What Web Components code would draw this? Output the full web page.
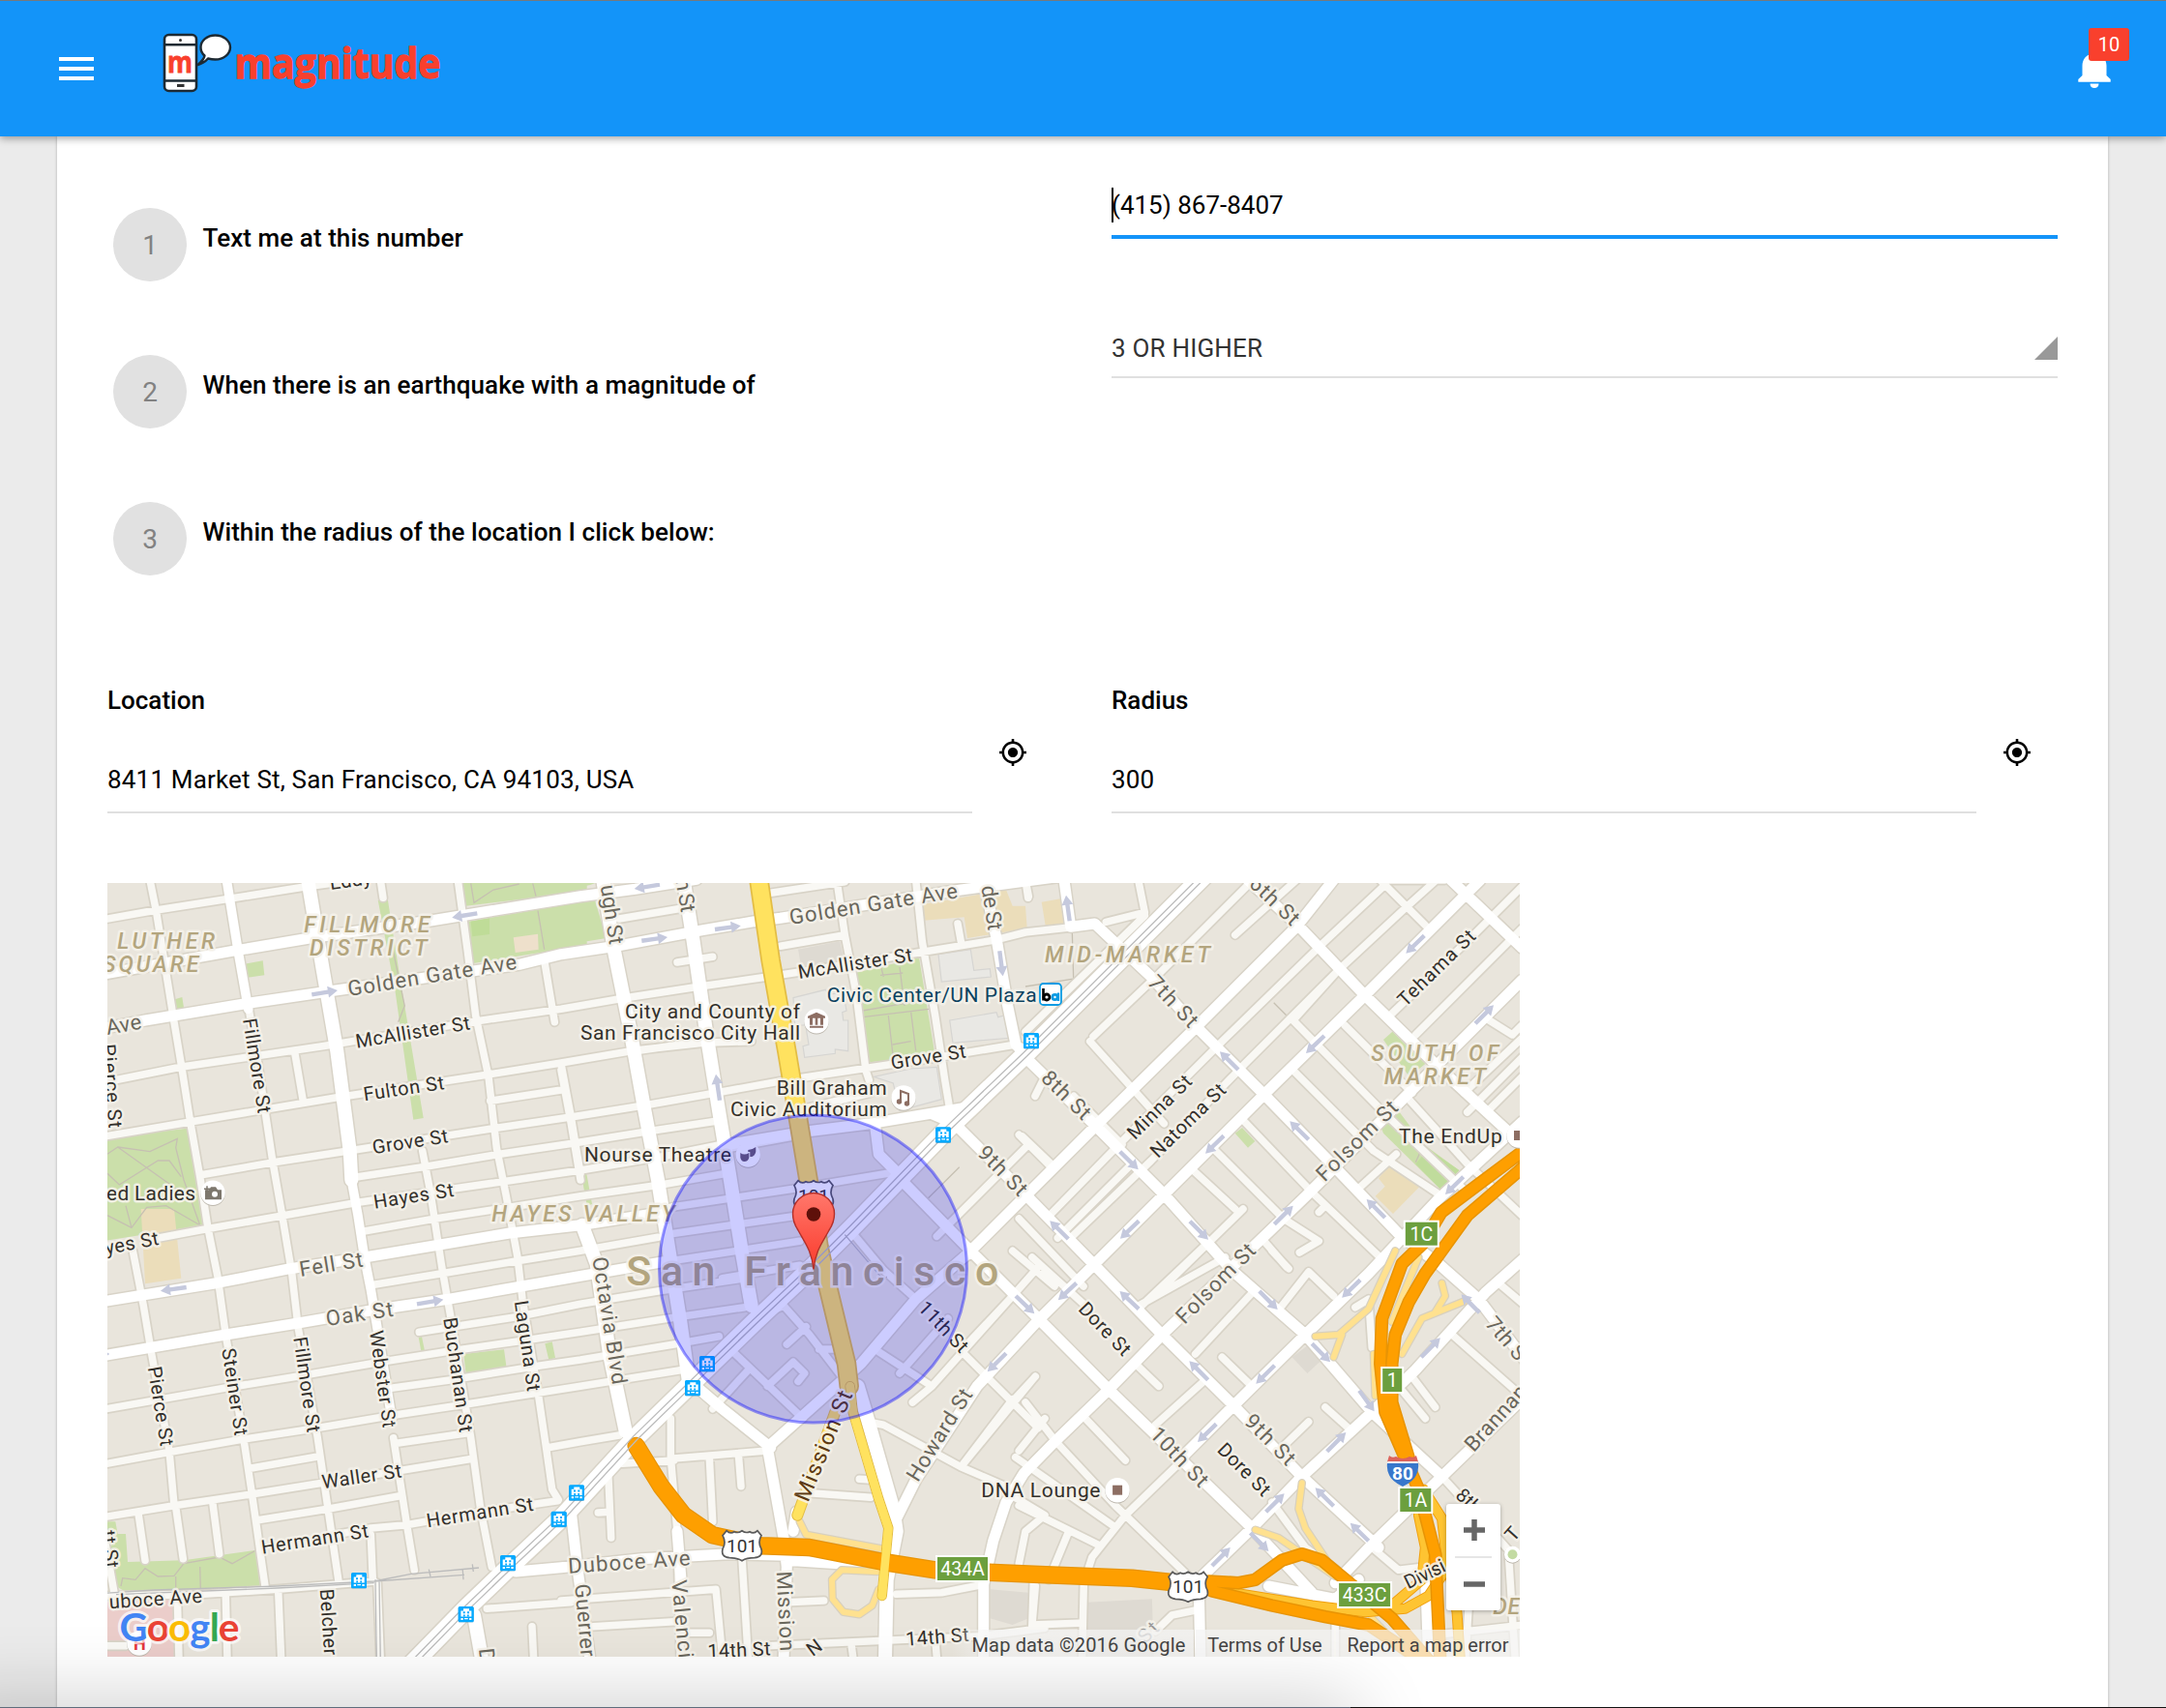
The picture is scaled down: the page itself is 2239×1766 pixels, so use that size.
<!DOCTYPE html>
<html lang="en">
<head>
<meta charset="utf-8">
<title>Magnitude</title>
<style>
html,body{margin:0;height:100%;background:#ebebeb;font-family:Roboto,"Liberation Sans",sans-serif;overflow:hidden}
</style>
</head>
<body>
<mg-app></mg-app>
<script>
const define = (name, html, setup) => customElements.define(name, class extends HTMLElement {
  constructor(){
    super();
    this.attachShadow({mode:'open'}).innerHTML = html;
  }
  connectedCallback(){ if (setup) setup(this, this.shadowRoot); }
});

define('mg-logo', `
<style>:host{display:block;width:300px;height:70px}svg{display:block;overflow:visible}</style>
<svg width="300" height="70" viewBox="165 30 300 70">
  <rect x="170" y="36" width="33" height="58" rx="4.5" fill="#fff" stroke="#1d2a33" stroke-width="2.6"/>
  <path d="M170 46.3H203M170 83.5H203" stroke="#1d2a33" stroke-width="2.6"/>
  <rect x="183" y="87" width="7.5" height="3" fill="#333"/><circle cx="186.5" cy="41.5" r="1.5" fill="#333"/>
  <path d="M222.500 36.500C231 36.500 238 42 238 49S231 61.500 222.500 61.500C219.500 61.500 217 61 215 60.500C212 64 208.500 66 204.500 67C208 64 211 61 211.500 57.500C209 55.500 207.500 52.500 207.500 49C207.500 42 214 36.500 222.500 36.500Z" fill="#fff" stroke="#1d2a33" stroke-width="2.4" stroke-linejoin="round"/>
  <text x="173" y="74.500" font-family="Open Sans" font-weight="700" font-size="31" fill="#f9402d" stroke="#f9402d" stroke-width=".8" textLength="26" lengthAdjust="spacingAndGlyphs">m</text>
  <text x="242.500" y="80.500" font-family="Open Sans" font-weight="700" font-size="43" fill="#f9402d" stroke="#f9402d" stroke-width="1.300" textLength="213" lengthAdjust="spacingAndGlyphs">magnitude</text>
</svg>`);

define('mg-bell', `
<style>
:host{display:block;position:relative;width:34px;height:41px}
svg{display:block}
.badge{position:absolute;left:11px;top:-22px;width:42px;height:34px;border-radius:3px;background:#f9402d;color:#fff;font-size:20px;line-height:34px;text-align:center}
</style>
<svg width="34" height="41" viewBox="0 0 34 41"><path fill="#fff" d="M14.200 4.500C14.200 2 15.200 .8 17 .8S19.800 2 19.800 4.500C26 6 29.500 11 29.500 17V27L33.700 31V33.700H.3V31L4.500 27V17C4.500 11 8 6 14.200 4.500ZM12.500 35.500H21.500C21.500 38.500 19.500 40 17 40S12.500 38.500 12.500 35.500Z"/></svg>
<span class="badge"><slot></slot></span>`);

define('mg-header', `
<style>
:host{display:flex;box-sizing:border-box;height:141px;padding:0 57px 0 61px;background:#1394f9;border-top:1px solid #75797d;position:relative;z-index:3;box-shadow:0 2px 8px rgba(0,0,0,.38)}
.burger{display:flex;flex-direction:column;gap:6px;margin-top:58px;width:36px}
.burger i{height:4px;background:#fff}
mg-logo{margin:29px auto 0 68px}
mg-bell{margin-top:50px}
</style>
<div class="burger"><i></i><i></i><i></i></div>
<mg-logo></mg-logo>
<mg-bell>10</mg-bell>`);

define('mg-step', `
<style>
:host{display:flex;gap:16.5px;height:152px;padding-left:6px;font-size:26px;font-weight:500;color:#000;box-sizing:border-box}
b{width:76px;height:76px;border-radius:50%;background:#e1e1e1;color:#828282;font-size:28px;font-weight:400;line-height:77px;text-align:center}
span{line-height:30px;margin-top:16px;white-space:nowrap;letter-spacing:.065px}
</style>
<b></b><span><slot></slot></span>`, (el, r) => r.querySelector('b').textContent = el.getAttribute('n'));

define('mg-field', `
<style>
:host{display:flex;align-items:center;box-sizing:border-box;height:60px;border-bottom:2px solid #e0e0e0;font-size:26px;line-height:36px;color:#000;white-space:nowrap}
:host([focused]){border-bottom:4px solid #1394f9;height:62px;padding-bottom:4px}
i{display:none;width:2px;height:36px;background:#000;margin-right:-2px}
:host([focused]) i{display:block}
:host([select]){color:#333;letter-spacing:.2px}
svg{display:none;margin-left:auto}
:host([select]) svg{display:block}
</style>
<i></i><slot></slot><svg width="24" height="24"><path d="M24 0V24H0Z" fill="#999"/></svg>`);

define('mg-locator', `
<style>
:host{display:grid;grid-template-columns:894px 28px;column-gap:28px;align-items:start}
label{grid-column:1/3;font-size:26px;font-weight:500;line-height:30px;height:73px}
mg-field{height:60px;margin-top:-1px;grid-column:1;padding-bottom:8px;letter-spacing:.18px}
svg{display:block;margin-top:-18px}
</style>
<label></label>
<mg-field><slot></slot></mg-field>
<svg width="28" height="28" viewBox="1 1 22 22"><path d="M12 8c-2.210 0-4 1.790-4 4s1.790 4 4 4 4-1.790 4-4-1.790-4-4-4zm8.940 3c-.46-4.170-3.770-7.480-7.940-7.940V1h-2v2.060C6.830 3.520 3.520 6.830 3.060 11H1v2h2.060c.46 4.170 3.770 7.480 7.940 7.940V23h2v-2.060c4.170-.46 7.480-3.770 7.940-7.940H23v-2h-2.060zM12 19c-3.870 0-7-3.130-7-7s3.130-7 7-7 7 3.130 7 7-3.130 7-7 7z"/></svg>`,
(el, r) => r.querySelector('label').textContent = el.getAttribute('label'));

/* Map survey sheets: origin and units per pixel. Points in the data below are
   written as "sheet x,y x,y ..." and converted to page units. */
const sheets = {A:[100,900,3],B:[580,900,3],C:[1060,900,3],D:[100,1300,3],E:[580,1300,3],F:[1060,1300,2.9037]};
const pts = s => {
  let t = sheets.A; const out = [];
  for (const k of s.trim().split(/\s+/)) {
    if (sheets[k]) { t = sheets[k]; continue; }
    const [x,y] = k.split(',').map(Number);
    out.push([+(t[0]+x/t[2]).toFixed(1), +(t[1]+y/3).toFixed(1)]);
  }
  return out;
};
const line = s => 'M' + pts(s).map(p => p.join(' ')).join('L');
const lines = s => s.trim().split(/\n|\|/).map(line).join('');

const parks = `
A 20,830 280,800 330,1100 20,1150
A 872,92 902,88 940,330 1013,768 982,773 925,370
A 1128,20 1520,20 1520,65 1145,110
A 1150,158 1520,95 1520,232 1168,288
B -10,105 105,92 140,210 -10,235
B -10,30 130,30 90,45 -10,65
A 460,290 515,280 520,325 468,332
A 242,400 265,393 270,425 250,432
B 912,318 1110,270 1160,575 955,595
B 62,938 78,935 96,1035 80,1040
D 1138,300 1263,286 1272,352 1146,372
D 1390,268 1412,262 1422,312 1402,318
D 998,248 1008,246 1018,295 1007,298
D 20,820 58,820 65,858 90,858 96,945 270,940 495,908 512,1020 330,1030 90,1038 60,1020 55,970 20,975
C 1110,525 1138,500 1240,600 1190,640
C 1100,790 1160,750 1235,850 1345,930 1290,992 1110,815
C 650,815 672,798 712,840 690,860`;
const sand = `
D 137,-150 240,-150 262,65 150,82
B 1120,105 1380,60 1400,110 1440,110 1445,180 1260,210 1250,145 1125,155
C 50,98 108,88 120,165 62,172
C 1145,895 1228,975 1140,1065 1085,1010 1115,980 1095,955`;
const grounds = `
B 735,245 865,220 878,280 745,300
F 800,310 845,275 890,318 846,360
F 185,1070 380,1060 385,1240 185,1240
E 1330,1030 1450,1040 1450,1120 1400,1140 1330,1120`;
const buildings = `
B 720,395 820,370 830,385 875,378 885,435 872,440 875,465 890,465 890,560 850,555 850,568 755,580 750,545 768,540 758,480 725,480
B 1170,260 1270,245 1280,310 1330,305 1333,330 1180,345
B 1205,465 1350,440 1355,455 1375,450 1390,520 1215,535
B 970,640 1085,615 1165,610 1180,710 1050,745 1030,660`;
const minor = `
A 33,150 190,122 410,88 640,52 860,22
A 20,658 260,610 700,545 1180,467 B 0,430 200,395 430,360 640,330 760,312 1090,258 1350,215 C 0,192 130,178
A 20,826 290,780 740,705 1200,635 B 0,597 230,558 440,535 590,530
A 320,945 550,905 780,870 1230,800 B 45,763 270,727 480,690 700,650 1000,605 1170,580 1410,540
A 800,952 1010,920 1250,880 B 45,845 280,808 500,775
A 180,1142 340,1112 580,1070 810,1030 1260,965 B 60,930 300,890 500,850
A 825,1120 1050,1080 1280,1045 B 60,1010 310,975 500,942
A 1220,715 1445,680
D 860,85 1070,50 1300,12 E 60,-20 300,-62
D 1000,232 1300,185 E 60,145 300,105 570,65
D 20,472 400,405 620,370 880,325 1100,290 1310,260 E 60,232 330,190 570,155
D 880,410 1100,380 1380,335 E 60,318 350,270 490,245
D 20,642 220,605 450,565 680,530 920,490 1150,455 E 60,400 370,350
D 475,655 690,617
D 930,577 1150,545
D 1400,590 E 60,572 180,552
D 20,806 240,770 480,735 700,700 950,660 1165,625
D 500,815 720,780 940,740
D 740,860 850,840 960,830 1190,790 1430,755
A 165,30 185,130 235,440 265,620 290,780 320,950 345,1110 D 375,60 400,240 455,560 485,760 522,1020
A 470,420 500,600 545,900 575,1070 D 605,50 625,220 685,560 720,800 750,1005
A 1120,30 1150,250 1175,450 1215,640 1240,860 1270,1010 D 1305,0 1320,130 1370,430 1395,600 1412,720 1432,752
A 1010,870 1035,1000 D 1070,30 1100,200 1160,560 1190,780 1225,960
A 880,30 888,85
A 615,570 640,715
A 1390,290 1420,470
A 1440,600 1470,760 B 60,940
A 112,1180 D 145,150 170,300 225,600 240,770
D 130,800 150,940|D 245,775 268,935|D 360,765 380,920
D 20,850 55,1045
D 20,1050 330,1045 560,1030 860,1005
D 250,1050 255,1250|D 400,1050 405,1250|D 563,1035 572,1250|D 850,860 856,1000|D 870,1010 880,1250|D 1350,1145 1355,1250|D 920,560 960,820 985,970
D 1210,1090 1470,1070
D 33,1205 90,1205
B 180,150 390,115|B 360,285 470,268|B 230,560 440,530
B 650,70 880,35|B 680,235 880,200
B 855,30 880,200 915,380 945,620 955,650|B 1100,30 1120,220 1160,450 1190,650 1205,740
B 1230,165 1240,220|B 1440,30 1448,85
B 530,860 720,825
B 340,1045 740,985 1040,935|B 320,1130 740,1070|B 350,1210 740,1150|B 500,1265 740,1225
B 900,1120 1000,1240 E 1100,130
B 0,620 30,780 60,960
B 770,735 960,690
E 690,150 770,240 870,370|E 760,215 700,270|E 530,290 750,500|E 580,350 470,470|E 640,400 720,325 755,360 735,385|E 690,150 600,190
E 980,290 1150,400 1400,120|E 1050,360 1200,190|E 850,285 800,285
E 1090,450 1150,400|E 1240,290 1480,530|E 1470,370 1240,650
E 950,510 1000,520 1240,650 1400,720|E 1240,650 1400,440
E 1240,290 1400,120 1480,30
E 340,500 340,620 360,850 370,1240
E 340,625 640,600|E 460,620 470,820|E 550,610 558,710|E 190,640 350,630|E 145,640 155,870|E 115,792 150,790
E 0,1065 480,1030 500,1240|E 100,1145 350,1130|E 370,1165 460,1165
E 560,920 580,1240|E 700,1070 815,1065|E 750,730 960,745|E 925,688 960,690
E 1040,1045 1180,1040 1310,1015|E 640,1205 1300,1175 1500,1150
E 1465,1010 1460,1150|E 900,1200 905,1240|E 1160,1180 1165,1240
E 1400,740 1500,800 1440,850 1420,950|E 1420,600 1500,500
B 1165,1135 1440,860|B 1430,825 1530,920
C 350,30 370,130 250,160|C 0,30 10,80|C 370,140 0,500
C 690,45 415,320 210,515|C 840,30 650,200
C 1115,45 920,228 610,530 300,840 75,1070
C 1440,-120 1180,115 970,310 680,600 390,900 150,1130
C 1300,30 1100,30 1240,170
C 1540,50 1380,210 1130,450
C 1540,180 1210,510|C 1540,580 1370,750|C 1430,460 1510,510 1540,480|C 1360,690 1540,520
C 200,530 430,785|C 60,640 30,700
C 830,465 1100,740 1370,1000|C 970,310 830,465|C 990,480 1200,690
C 830,620 1080,870 1290,1010|C 680,780 890,1000 1110,1210
C 590,870 800,1080 910,1150 850,1185|C 520,930 650,1050|C 675,1050 430,1290|C 1040,980 1150,880
C 910,1060 930,1040|C -20,820 75,915|C -20,1080 180,1290|C -40,1180 90,1290|C 740,1150 810,1230|C 560,1160 350,1360
C 1180,700 1370,910 1540,1070|C 1440,740 1540,640|C 300,850 150,700
C 320,920 100,1140
F 180,500 300,630|F 30,370 -60,470|F 590,310 670,390|F 900,465 970,530|F 850,510 770,590|F 1120,400 1200,500|F 1160,370 1230,465
F 1270,230 1500,440|F 330,330 400,400|F 690,100 510,300|F 540,380 390,520|F 850,45 770,150|F 850,45 925,120|F 990,155 1030,130 1040,280
F 20,0 180,150|F 0,450 90,570 270,770 500,1000|F -30,620 260,830|F -20,770 225,895|F 130,850 70,1000
F 480,620 300,800 200,930 175,1010 170,1250|F 30,1020 20,1140 160,1135|F 740,760 840,900 1000,1020
F 1250,680 1400,850 1460,920|F 1420,80 1500,150|F 1450,920 1470,1250|F 390,1160 440,1110 510,1095
F 1040,900 1120,970 1200,960|F 740,-20 790,35|F 1330,1090 1320,1250|F 1240,1170 1500,1140|F 930,1140 930,1250|F 600,0 340,150`;
const major = `
A 20,322 433,248 660,210 1040,155 B 60,80 230,58 420,28
A 20,490 150,465 470,412 740,372 1310,292 B 0,260 170,235 440,185 600,158 680,148 1240,60 1540,20
D 20,137 370,80 600,35 A 830,1200 1280,1125 B 60,1100 330,1058
D 20,305 400,240 620,205 850,165 1090,130 E 60,58 340,10
B 520,850 760,810 960,785 1260,735
B 975,800 985,880 1050,945
B 1310,30 1350,210 1385,420 1410,540 1440,570 C 0,580 215,790 430,1005 640,1240 F 840,240 1040,480 1250,680
C 120,30 140,175 215,165 390,330 530,485 740,695 940,900 1160,1130 F 1240,20 1360,130 1500,320
B 1150,755 1220,785 1440,1005 C 210,1220 F 410,240 625,460 830,680 1060,900
B 1040,945 1260,1170 E 1470,180 F 250,410 680,840 860,1040
C 690,30 850,175 1050,385 1280,610 1540,850
C 1320,30 1540,240
C 955,30 840,175 525,490 215,795 0,1010 B 1260,1190 E 1100,130 930,330 640,590
C 1410,30 1050,390 740,695 430,1005 215,1220 E 1480,195 1290,400 1100,690 1040,810
C 1540,340 1270,610 870,1010 F 420,230 250,410 90,570 -5,670 E 1380,760 1340,880 1310,1015 1310,1250
C 1540,780 1280,1020 F 1030,50 840,240 625,460 480,610
F 1500,0 1380,110 1170,350 1040,480 830,680 680,840 520,1000 525,1240
F 1500,430 1250,680 1050,880 930,1010
E 30,780 50,960 90,1250
D 1300,975 E 0,962 250,935 520,920 700,925
E 640,590 690,870 700,960 690,1250
E 395,380 500,470 650,590
E 730,790 720,850|E 360,850 372,1000|E 700,940 1010,960
F 730,1020 930,1060 1000,1000|F 1200,960 1210,1250`;
const wide = `
A 655,30 700,300 745,560 785,870 790,960
B 130,30 165,250 215,500 260,750 300,960 330,1150 E 370,200 395,380
B 380,30 410,220 450,500 490,750 520,930 560,1180 E 590,150
B 65,1100 E 110,20 150,300 200,540
E 920,400 950,500 1030,780 1040,850 1010,1000 1005,1250
D 1170,1110 1195,1250`;
const half = `
A 403,30 440,260 470,430
A 790,960 810,1070 830,1200 D 850,100 870,220 915,500`;
const market = 'D 950,1290 1145,1090 1280,960 1450,800 E 230,560 410,385 600,200 780,30 B 900,1110 1200,800 1440,570 C 300,270 560,10';
const ramps = `
F 870,245 940,240 1030,160 1110,-20|F 950,240 925,310|F 1320,135 1190,190 1130,300|F 1250,80 1260,120 1230,170
F 830,700 820,780 840,840 930,980|F 690,845 760,870 930,990|F 1045,300 1050,430|F 1040,1120 1150,1240
E 740,820 760,860 1000,905|F 1180,0 1100,200
E 980,975 870,970 840,1000 842,1060 875,1100 925,1108 965,1080 985,1030`;
const amber = `
F 560,1030 860,1080 1020,1100 1140,1090 1210,1050 1255,980
F 1195,720 1250,810 1260,900 1295,1100 1305,1250
F 1180,800 1200,900 1190,1000 1100,1080`;
const freeway = `
F 550,1005 640,1010 690,1000 770,940 830,920 890,940 1100,1120 1210,1250
F 560,1035 740,1080 900,1115 1030,1140 1190,1250
C 1550,865 1290,1060 1230,1160 F 1130,20 1070,190 1065,330 1080,480 1130,600 1180,720 1230,920 1245,1250
C 1550,915 1370,1070 1240,1250 F 1150,140 1110,240 1100,330 1100,450 1150,620`;
const arrows = `A 1180,133 1102,146|A 667,385 747,372|B 306,44 227,57|B 250,218 330,207|B 477,183 557,172|B 1360,250 1370,328|B 492,713 480,632
D 278,93 198,104|D 993,145 1075,131|E 1410,120 1468,175|E 1380,298 1322,355
C 137,157 126,77|C 1237,202 1180,257|C 927,513 870,567|C 660,618 603,562|C 615,823 558,878|C 878,835 820,778|C 293,872 350,928|C 1395,475 1452,418|C 1358,950 1302,1005|C 1115,1077 1058,1020|C 772,1097 830,1040|C 352,1087 294,1142|C 510,1088 567,1145|C 133,1143 76,1087
F 153,80 98,133|F 340,160 283,105|F 702,105 757,162|F 1005,70 950,125|F 748,335 692,392|F 548,380 492,322|F 860,268 915,325|F 1002,413 1047,478|F 573,517 517,573|F 905,602 962,543|F 1188,310 1245,250|F 1363,172 1308,115|F 722,790 777,733|F 925,772 870,715|F 1030,880 975,824|F 675,855 730,912|F 560,957 615,900|D 20,300 40,300`;

const K='#33302b', G='#6a675c', T='#b3a57e';
/* text | baseline start and end | size | colour | style */
const labels = [
['LUTHER','A 64,243 366,243',23,T,'n'],['SQUARE','A 18,316 316,316',23,T,'n'],
['FILLMORE','A 643,192 1033,192',23,T,'n'],['DISTRICT','A 660,264 1025,264',23,T,'n'],
['HAYES VALLEY','A 1225,1090 B 353,1090',23,T,'n'],['MID-MARKET','C 60,284 573,284',23,T,'n'],
['SOUTH OF','C 1072,590 1468,590',23,T,'n'],['MARKET','C 1112,662 1428,662',23,T,'n'],['DE','F 1403,1106 1484,1106',23,T,'n'],
['Eddy','A 725,60 855,42',20,K],['Golden Gate Ave','A 782,390 1305,305',22,G],['McAllister St','A 806,551 1160,493',20,K],
['Fulton St','A 830,715 1080,678',20,K],['Grove St','A 858,880 1092,843',20,K],['Hayes St','A 862,1049 1110,1010',20,K],
['Fell St','A 632,1260 828,1228',22,G],['Ave','A 33,510 142,490',22,G],['yes St','A 30,1192 195,1160',20,K],
['Fillmore St','A 453,462 500,755',20,K],['Pierce St','A 15,540 38,800',20,K],
['ed Ladies','A 30,1022 306,1022',21,K],
['Golden Gate Ave','B 712,168 1232,84',22,G],['McAllister St','B 738,336 1092,281',20,K],['Grove St','B 1026,617 1258,580',20,K],
['City and County of','B 198,459 741,459',21,K],['San Francisco City Hall','B 60,525 741,525',21,K],
['Bill Graham','B 668,695 1010,695',21,K],['Civic Auditorium','B 525,762 1010,762',21,K],['Nourse Theatre','B 72,903 528,903',21,K],
['Civic Center/UN Plaza','B 824,407 1475,407',21,'#0b4260'],
['ugh St','B 122,48 150,232',22,G],['n St','B 355,30 373,132',22,G],['de St','B 1303,50 1325,188',22,G],
['9th St','B 1288,880 1420,1015',22,G],['8th St','C 45,648 178,778',22,G],['7th St','C 376,350 508,492',22,G],['6th St','C 690,45 825,175',22,G],
['Minna St','C 340,838 520,658',20,K],['Natoma St','C 411,895 626,685',20,K],['Tehama St','C 1178,425 1400,208',20,K],
['Folsom St','C 928,968 1160,740',22,G],['The EndUp','C 1158,845 1478,845',21,K],
['Folsom St','F 478,210 C 718,1183',22,G],
['Oak St','D 714,213 922,182',22,G],['Pierce St','D 158,342 198,588',20,K],['Steiner St','D 388,285 428,555',20,K],
['Fillmore St','D 610,250 653,545',20,K],['Webster St','D 846,230 888,530',20,K],['Buchanan St','D 1075,190 1126,545',20,K],
['Laguna St','D 1295,137 1336,418',20,K],['Waller St','D 701,718 948,682',20,K],['Hermann St','D 514,920 845,868',20,K],['Hermann St','D 1026,838 1357,785',20,K],
['tt St','D 15,850 28,965',20,K],['uboce Ave','D 40,1090 328,1070',20,K],['Belcher','D 692,1030 706,1235',20,K],
['D','D 1185,1215 1190,1262',22,G],
['Octavia Blvd','E 97,2 160,397',22,G],['Duboce Ave','E 23,980 402,955',22,G],['Guerrer','E 43,1015 62,1240',22,G],['Valenci','E 343,1003 365,1245',22,G],
['Mission','E 668,975 680,1222',22,G],['14th St','E 455,1243 650,1234',20,K],['14th St','E 1070,1205 1266,1190',20,K],
['Mission St','E 766,762 905,425',23,'#5d3a12'],['Howard St','E 1106,700 1278,425',22,G],['11th St','E 1104,160 1238,300',20,K],
['DNA Lounge','E 1303,745 F 225,745',21,K],['Dore St','F 156,163 293,310',20,K],['Dore St','F 573,600 713,745',20,K],
['9th St','F 653,512 785,650',22,G],['10th St','F 370,552 523,718',22,G],['7th S','F 1378,208 1475,325',22,G],['Brannan','F 1346,607 1510,420',22,G],
['8th','F 1288,742 1345,800',20,K],['Divisi','F 1148,1030 1265,972',20,K],
['St','F 360,1200 405,1155',20,'#999'],['N','E 780,1240 800,1225',20,K],['T','F 1465,885 1485,862',20,K]
];
const label = ([t,p,size,color,kind]) => {
  const [a,b] = pts(p), dx=b[0]-a[0], dy=b[1]-a[1], len=Math.hypot(dx,dy).toFixed(1), ang=(Math.atan2(dy,dx)*180/Math.PI).toFixed(2);
  const st = kind==='n' ? ' font-style="italic" font-weight="500"' : '';
  return `<text transform="translate(${a}) rotate(${ang})" font-size="${size}" fill="${color}" textLength="${len}"${st}>${t}</text>`;
};
const areas = (s, fill) => `<path fill="${fill}" d="${s.trim().split('\n').map(l => line(l)+'Z').join('')}"/>`;
const road = (d, w, fill, edge, ew=3) => [`<path d="${d}" stroke="${edge}" stroke-width="${w+ew}"/>`, `<path d="${d}" stroke="${fill}" stroke-width="${w}"/>`];
const arrow = s => {
  const [[x1,y1],[x2,y2]] = pts(s), l=Math.hypot(x2-x1,y2-y1), a=Math.atan2(y2-y1,x2-x1)*180/Math.PI;
  return `<path transform="translate(${x1} ${y1}) rotate(${a.toFixed(1)})" d="M0-2.200H${(l-10).toFixed(1)}V-6L${l.toFixed(1)} 0L${(l-10).toFixed(1)} 6V2.200H0Z"/>`;
};
const station = s => { const [[x,y]] = pts(s); return `<g transform="translate(${x-8} ${y-8})"><rect y=".6" width="16" height="16" rx="1.500" fill="#0a84c6" opacity=".6"/><rect width="16" height="16" rx="1.500" fill="#03a9ff"/><path fill="#fff" d="M5.300 2.200H11.300V4.400H13.700V10.600H2.700V4.400H5.300ZM2.700 12H5V14H2.700ZM6.300 12H10V13.300H6.300ZM11.400 12H13.700V14H11.400Z"/><path fill="#03a9ff" d="M5 5.200H7V7.200H5ZM9.300 5.200H11.300V7.200H9.300ZM5.300 8.600H7V10.600H5.300ZM9.300 8.600H11V10.600H9.300Z"/></g>`; };
const poi = (s, inner, r=12.7) => { const [[x,y]] = pts(s); return `<g transform="translate(${x} ${y})"><circle r="${r}" cy="1" fill="#bdb8ae"/><circle r="${r}" fill="#fff"/>${inner}</g>`; };
const exit = (s, w, t) => { const [[x,y]] = pts(s); return `<g transform="translate(${x} ${y})"><rect x="${-w/2}" y="-13" width="${w}" height="26" fill="#6c9f3e" stroke="#fff" stroke-width="2"/><text text-anchor="middle" y="7" font-size="19.500" fill="#fff" stroke="none">${t}</text></g>`; };
const us = (s) => { const [[x,y]] = pts(s); return `<g transform="translate(${x} ${y})"><path d="M-16-15Q-12-11-8-14Q-4-12 0-15Q4-12 8-14Q12-11 16-15L20-10Q16-3 20 4Q22 12 13 13Q5 13 0 16Q-5 13-13 13Q-22 12-20 4Q-16-3-20-10Z" fill="#fff" stroke="#5a5a5a" stroke-width="1.700"/><text text-anchor="middle" y="7" font-size="19" fill="#333" stroke="none">101</text></g>`; };

const roadLayers = () => {
  const m = road(lines(minor),7.5,'#f9f8f4','#d8d3c7',3.4), j = road(lines(major),11,'#fff','#d8d3c7',3), h = road(lines(half),9.5,'#fff','#d8d3c7',3),
        w = road(lines(wide),14,'#fff','#d8d3c7',3), k = road(line(market),19,'#fff','#d8d3c7',3);
  const r = road(lines(ramps),6,'#ffe18f','#d8d0bd',2.5), a = road(lines(amber),9,'#fec432','#f0a010',2);
  const v1 = road(line('B 612,20 650,280 700,560 740,800 770,980 800,1170 E 820,60 885,330 893,400'),17,'#ffe25f','#e3bd45',3.5);
  const v2 = road(line('E 896,400 905,480 985,750 1015,840 995,1050'),8.5,'#ffe25f','#e3bd45',2);
  const v3 = road(line('E 733,800 850,480'),10,'#ffe25f','#e3bd45',2);
  const f = road(lines(freeway),10.5,'#fe9f00','#e89404',3);
  const f1 = road(line('E 233,585 310,710 380,800 470,862 620,895 770,900 1000,945 1160,970 F 60,985 320,995 550,1020'),16,'#fe9f00','#e89404',2.5);
  return m[0]+j[0]+h[0]+w[0]+k[0]+m[1]+j[1]+h[1]+w[1]+k[1]+r.join('')+v3.join('')+v1.join('')+v2.join('')+a.join('')+f[0]+f1[0]+f[1]+f1[1]+v2[1];
};
const rail = (dx,dy) => `<path transform="translate(${dx} ${dy})" d="${line(market)}"/>`;

define('mg-map', `
<style>
:host{display:block;position:relative;width:1460px;height:800px;overflow:hidden;background:#e9e5dc}
svg{display:block}
.zoom{position:absolute;right:20px;bottom:48px;width:56px;height:110px;background:#fff;border-radius:3px;box-shadow:0 1px 4px rgba(0,0,0,.3);display:flex;flex-direction:column;align-items:center}
.zoom svg{height:54px;margin-left:2px}.zoom hr{width:38px;height:2px;margin:0;border:0;background:#e6e6e6}
.legal{position:absolute;right:0;bottom:0;height:28px;display:flex;gap:2px;font-size:20px;line-height:33px;color:#444;white-space:nowrap}
.legal span{background:rgba(245,245,245,.72);box-sizing:border-box;text-align:center;height:28px}
.legal span:first-child{background:linear-gradient(90deg,rgba(245,245,245,0),rgba(245,245,245,.72) 40px);letter-spacing:.15px}
</style>
<svg id="map" width="1460" height="800" viewBox="111 913 1460 800" font-family="Roboto"></svg>
<div class="zoom"><svg width="22" height="54"><path d="M0 27H22M11 16V38" stroke="#666" stroke-width="5.500"/></svg><hr><svg width="22" height="54"><path d="M0 27H22" stroke="#666" stroke-width="5.500"/></svg></div>
<div class="legal"><span style="width:250px;padding-left:12px">Map data ©2016 Google</span><span style="width:143px">Terms of Use</span><span style="width:190px">Report a map error</span></div>`,
(el, r) => {
  r.querySelector('#map').innerHTML =
    areas(parks,'#cbdfaa') + areas(sand,'#ebddba') + areas(grounds,'#dedad2')
    + areas(`C 1210,910 1250,865 1345,930 1290,992`,'#c0dc9c') + areas('A 1160,158 1218,148 1218,198 1165,205','#bfdc98') + areas('A 1292,208 1368,197 1370,245 1298,255','#eee0cb')
    + areas('D 20,1070 242,1060 242,1250 20,1250','#ebcdca')
    + `<g stroke="#d6d5d2" stroke-width="1.200">${areas(buildings,'#e9e8e4')}</g>`
    + `<g fill="none" stroke="#c6c0b2" stroke-width="1.300"><path d="${lines(`A 33,880 65,858 250,990
A 65,858 165,872 250,832 245,860 270,960 320,1100
A 33,940 70,975 190,900 225,900 262,950
A 33,1070 108,1108 155,1045 215,1040 320,1100
A 90,1040 108,1108
A 1160,40 1170,100 1230,60 1310,42|A 1352,40 1362,80|A 1368,125 1388,245|A 915,230 955,420 935,470
B 935,435 1135,400|B 935,455 1140,430|B 1015,450 1030,580|B 1085,440 1100,560|B 990,325 1060,318|B 1050,300 1065,420|B 1028,540 1085,530|B 990,290 1000,330
C 145,190 150,370|C 0,360 190,330 230,290|C 770,410 815,455|C 1235,850 1210,905|B 1235,920 1135,1020
D 75,1020 80,995 120,1000 150,965 190,990 240,988 270,950 380,930 420,950 495,908|D 320,960 322,1030|D 245,990 245,1030`)}"/></g>`
    + `<g fill="none" stroke-linecap="round" stroke-linejoin="round">${roadLayers()}</g>`
    + `<g fill="none" stroke="#bcbcbc" stroke-width="1.300">${rail(-1.8,-1.8)+rail(1.8,1.8)}<path d="${lines('B 880,1130 1000,1270 E 1010,60|D 20,1042 180,1032 560,1020 860,1005 1140,985|D 60,1046 560,1026 860,1010|D 860,1005 975,982 1185,963|D 864,1000 868,1250|D 876,1000 880,1250|D 1135,970 1137,1000|D 1030,968 1035,990|D 1165,952 1168,975')}"/></g>`
    + `<g fill="#c5c9dd">${arrows.split(/\n|\|/).map(arrow).join('')}</g>`
    + `<g stroke="#f5f2ea" stroke-opacity=".88" stroke-width="5" stroke-linejoin="round" paint-order="stroke">${labels.map(label).join('')}</g>`
    + `<text x="${580+202/3}" y="1328.500" font-size="43" font-weight="500" fill="#b3a57e" textLength="385" stroke="#f5f2ea" stroke-opacity=".85" stroke-width="5" paint-order="stroke">San Francisco</text>`
    + ['B 1458,528','B 1185,820','E 453,330','E 408,405','E 48,730','D 1433,812','D 1275,948','D 1145,1107','D 813,1002'].map(station).join('')
    + poi('A 360,1000','<path fill="#7d776d" d="M-8-3H-4L-2-6H3L5-3H9V7H-8Z"/><circle cx="2" cy="1.500" r="3" fill="#fff"/><path d="M-9-4H-3M-6-7V-1" stroke="#7d776d" stroke-width="1.500"/>')
    + poi('B 792,467','<path fill="#8d6e63" d="M-9-5L0-9L9-5V-3H-9ZM-7-3H-4V4H-7ZM-1.300-3H1.300V4H-1.300ZM4-3H7V4H4ZM-7 5H7V7H-7Z"/>')
    + poi('B 1062,705','<path fill="none" stroke="#8d6e63" stroke-width="2" d="M-3 4V-7L5-4V6"/><circle cx="-4.500" cy="4" r="2.700" fill="#8d6e63"/><circle cx="3.500" cy="6" r="2.700" fill="#8d6e63"/>')
    + poi('B 580,882','<path fill="#6e6070" d="M-8-2Q-4 1 1-2V3Q0 7-4 7Q-7 7-8 3ZM0-5Q4-5 8-8V-3Q7 1 4 2H2V-3H0Z"/>')
    + poi('F 276,722','<rect x="-5" y="-5" width="10" height="10" fill="#8d6e63"/>')
    + poi('C 1530,822','<rect x="-5" y="-5" width="10" height="10" fill="#8d6e63"/>')
    + poi('D 132,1197','<text x="-6" y="7" font-size="18" font-weight="700" fill="#e4373c">H</text>')
    + poi('F 1462,922','<circle r="5" fill="#c3dba2"/>',8.5)
    + `<rect x="1075" y="1017" width="22" height="22" rx="3.500" fill="#fff" stroke="#0b9be3" stroke-width="1.800"/><path d="M1078.500 1022V1034.500" stroke="#000" stroke-width="2.600"/><circle cx="1082" cy="1031" r="3" fill="none" stroke="#000" stroke-width="2.800"/><circle cx="1090.500" cy="1031" r="2.600" fill="none" stroke="#0b9be3" stroke-width="2.800"/><path d="M1094 1026.500V1035" stroke="#0b9be3" stroke-width="2.400"/>`
    + us('B 783,1007') + us('E 561,893') + us('F 488,1021')
    + exit('C 1228,1127',35,'1C') + exit('F 1101,381',22,'1') + exit('F 1171,753',34,'1A') + exit('F 1018,1047',55,'433C') + exit('E 1245,966',54,'434A')
    + `<g transform="translate(1450 1521)"><path d="M-14-16Q-11-13-7-15Q0-11 7-15Q11-13 14-16L16-9.500H-16Z" fill="#dc635c"/><path d="M-16-8H16Q18 8 0 16Q-18 8-16-8Z" fill="#3877cb"/><path d="M-15.500-9H15.500" stroke="#fff" stroke-width="1.800"/><text text-anchor="middle" y="8.500" font-size="19" font-weight="700" fill="#fff">80</text></g>`
    + `<circle cx="840.500" cy="1312" r="159" fill="#00f" fill-opacity=".2" stroke="#00f" stroke-opacity=".4" stroke-width="3"/>`
    + `<defs><linearGradient id="p" x1="0" y1="0" x2="0" y2="1"><stop offset="0" stop-color="#ff776b"/><stop offset="1" stop-color="#fb3b2c"/></linearGradient></defs>
       <path d="M841 1312.500C839 1293 832 1285 825 1272C821 1266 819.500 1261 819.500 1255A21.500 21.500 0 0 1 862.500 1255C862.500 1261 861 1266 857 1272C850 1285 843 1293 841 1312.500Z" fill="url(#p)" stroke="#b2302a" stroke-width="1.400"/><circle cx="841" cy="1255.500" r="7.300" fill="#5e100a"/>`
    + `<text x="123.500" y="1697" font-family="Lato" font-size="40.500" font-weight="700" textLength="124" stroke="#fff" stroke-opacity=".7" stroke-width="6" stroke-linejoin="round" paint-order="stroke"><tspan fill="#4285f4">G</tspan><tspan fill="#ea4335">o</tspan><tspan fill="#fbbc05">o</tspan><tspan fill="#4285f4">g</tspan><tspan fill="#34a853">l</tspan><tspan fill="#ea4335">e</tspan></text>`;
});

define('mg-app', `
<style>
:host{display:flex;flex-direction:column;height:1766px;width:2239px;position:relative;overflow:hidden}
main{flex:1;box-sizing:border-box;margin:0 60px 0 59px;padding:52px 52px 0;background:#fff;box-shadow:0 0 3px rgba(0,0,0,.25)}
.row{display:grid;grid-template-columns:1038px 978px}
.inputs{display:flex;flex-direction:column}
.inputs mg-field:first-child{margin-top:-8px}
.inputs mg-field:last-child{margin-top:84px}
.steps{padding-top:22px}
.locs{margin-top:38px}
mg-map{margin-top:72px}
.status{position:absolute;left:-60px;top:1765px;width:1456px;height:60px;background:#5f6c7b;box-shadow:0 0 80px 6px rgba(0,0,0,.2)}
.edge{position:absolute;left:0;right:0;top:1765px;height:1px;background:#111}
</style>
<mg-header></mg-header>
<main>
  <div class="row">
    <div class="steps">
      <mg-step n="1">Text me at this number</mg-step>
      <mg-step n="2">When there is an earthquake with a magnitude of</mg-step>
      <mg-step n="3">Within the radius of the location I click below:</mg-step>
    </div>
    <div class="inputs">
      <mg-field focused>(415) 867-8407</mg-field>
      <mg-field select>3 OR HIGHER</mg-field>
    </div>
  </div>
  <div class="row locs">
    <mg-locator label="Location">8411 Market St, San Francisco, CA 94103, USA</mg-locator>
    <mg-locator label="Radius">300</mg-locator>
  </div>
  <mg-map></mg-map>
</main>
<div class="edge"></div><div class="status"></div>`);
</script>
</body>
</html>
